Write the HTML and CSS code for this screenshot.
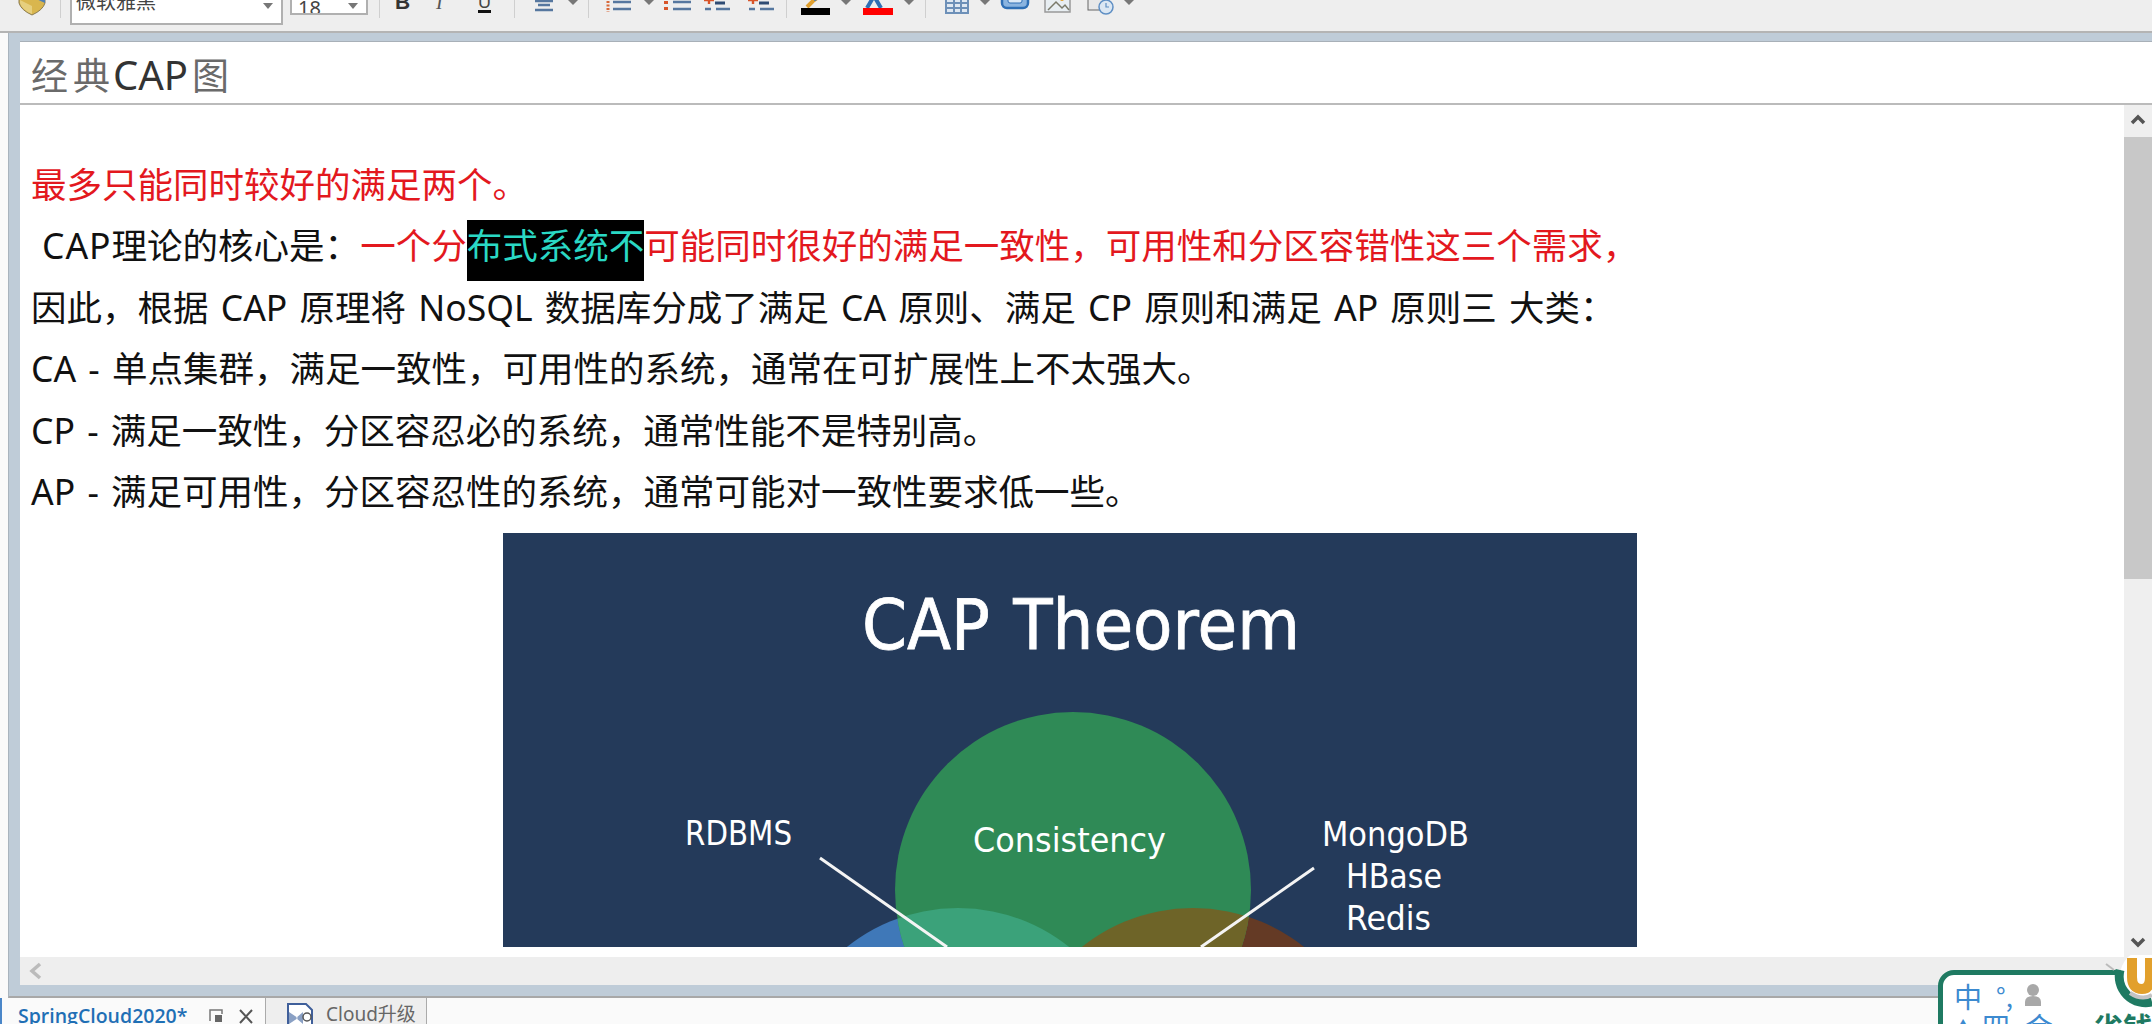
FILE: index.html
```html
<!DOCTYPE html>
<html lang="zh-CN">
<head>
    <meta charset="UTF-8">
    <title>经典CAP图</title>
    <link rel="stylesheet" href="styles.css">
</head>
<body>
    <div class="app">
        <!-- 工具栏 -->
        <div class="toolbar">
            <svg width="52" height="31" viewBox="0 0 52 31">
                <path d="M11 -8 L37 -8 L37 3 Q35 10 24 15 Q13 10 11 3 Z" fill="#d9b64e" stroke="#8a7b50"/>
                <path d="M24 -8 L37 -8 L37 3 L24 -3 Z" fill="#4f7fb5"/>
                <path d="M12 0 L24 6 L24 14 Q14 10 12 3 Z" fill="#e6cf7e"/>
            </svg>
            <span class="sep"></span>
            <div class="select font-select">微软雅黑<i class="caret"></i></div>
            <div class="select size-select">18<i class="caret"></i></div>
            <span class="sep sep-after-select"></span>
            <svg width="134" height="31" viewBox="0 0 134 31">
                <text x="15" y="9" class="tb-bold">B</text>
                <text x="56" y="9" class="tb-italic">I</text>
                <text x="98" y="8" class="tb-under">U</text>
                <rect x="98" y="10" width="13" height="3" fill="#111"/>
            </svg>
            <span class="sep"></span>
            <svg width="73" height="31" viewBox="0 0 73 31">
                <path d="M20 1H38M23 5H35M20 10H38" stroke="#56779f" stroke-width="2.4"/>
                <path d="M53 0H63L58 5Z" fill="#777"/>
            </svg>
            <span class="sep"></span>
            <svg width="197" height="31" viewBox="0 0 197 31">
                <path d="M19 1V12" stroke="#d8693a" stroke-width="3" stroke-dasharray="2 1.5"/>
                <path d="M24 2H42M24 9H42" stroke="#56779f" stroke-width="2.4"/>
                <path d="M55 0H65L60 5Z" fill="#777"/>
                <path d="M77 1V12" stroke="#d8552a" stroke-width="4" stroke-dasharray="3 3"/>
                <path d="M84 2H102M84 9H102" stroke="#56779f" stroke-width="2.4"/>
                <path d="M115 0H125M120 -2V4" stroke="#d8552a" stroke-width="2.4"/>
                <path d="M126 3H136" stroke="#2f4c74" stroke-width="3"/>
                <path d="M116 9H122M127 9H141" stroke="#56779f" stroke-width="2.4"/>
                <path d="M159 0H169M164 -2V4" stroke="#d8552a" stroke-width="2.4"/>
                <path d="M170 3H180" stroke="#2f4c74" stroke-width="3"/>
                <path d="M160 9H166M171 9H185" stroke="#56779f" stroke-width="2.4"/>
            </svg>
            <span class="sep"></span>
            <svg width="138" height="31" viewBox="0 0 138 31">
                <path d="M20 7L26 1L30 -2" stroke="#e0a030" stroke-width="4" fill="none"/>
                <path d="M27 0L32 -3" stroke="#3f78b8" stroke-width="3"/>
                <rect x="14" y="8" width="29" height="7" fill="#000"/>
                <path d="M54 0H64L59 5Z" fill="#777"/>
                <path d="M80 8L87 -4L94 8" stroke="#2f6fb5" stroke-width="4" fill="none"/>
                <rect x="76" y="8" width="30" height="7" fill="#f00"/>
                <path d="M117 0H127L122 5Z" fill="#777"/>
            </svg>
            <span class="sep"></span>
            <svg width="222" height="31" viewBox="0 0 222 31">
                <rect x="20" y="-4" width="22" height="17" fill="#dfe8f2" stroke="#6d90b8" stroke-width="2"/>
                <path d="M21 3H41M21 8H41M28 -4V13M35 -4V13" stroke="#6d90b8" stroke-width="2"/>
                <path d="M54 0H64L59 5Z" fill="#777"/>
                <rect x="76" y="-6" width="26" height="14" rx="5" fill="#8ab4e0" stroke="#2f6fb5" stroke-width="2.5"/>
                <rect x="82" y="-2" width="14" height="5" rx="2" fill="#dce9f6" stroke="#2f6fb5"/>
                <rect x="119" y="-5" width="25" height="17" fill="#e8eef2" stroke="#999" stroke-width="1.5"/>
                <path d="M122 10L130 2L136 8L139 5L143 10" stroke="#7a7a6a" stroke-width="1.5" fill="none"/>
                <circle cx="136" cy="-1" r="2" fill="#e0a030"/>
                <rect x="162" y="-3" width="16" height="13" fill="#e8e8e8" stroke="#666"/>
                <circle cx="180" cy="7" r="7" fill="#dbe7f3" stroke="#5f8fc4" stroke-width="1.5"/>
                <path d="M180 3V7H183" stroke="#5f8fc4" stroke-width="1.2" fill="none"/>
                <path d="M198 0H208L203 5Z" fill="#777"/>
            </svg>
        </div>

        <!-- 笔记内容 -->
        <div class="frame">
            <div class="editor">
                <div class="note-title"><span class="cjk-thin title-jing">经</span><span class="cjk-thin">典</span><span class="title-latin">CAP</span><span class="cjk-thin">图</span></div>
                <div class="doc-row">
                    <div class="doc">
                        <p class="line red">最多只能同时较好的满足两个。</p>
                        <p class="line indent"><span class="cap-wide">CAP</span>理论的核心是：<span class="red">一个分</span><span class="hl">布式系统不</span><span class="red">可能同时很好的满足一致性，可用性和分区容错性这三个需求，</span></p>
                        <p class="line">因此，根据 CAP 原理将 NoSQL 数据库分成了满足 CA 原则、满足 CP 原则和满足 AP 原则三 大类：</p>
                        <p class="line">CA - 单点集群，满足一致性，可用性的系统，通常在可扩展性上不太强大。</p>
                        <p class="line">CP - 满足一致性，分区容忍必的系统，通常性能不是特别高。</p>
                        <p class="line">AP - 满足可用性，分区容忍性的系统，通常可能对一致性要求低一些。</p>
                        <svg class="cap-image" width="1134" height="414" viewBox="0 0 1134 414">
                            <defs>
                                <clipPath id="clip-green"><circle cx="570" cy="357" r="178"/></clipPath>
                            </defs>
                            <rect width="1134" height="414" fill="#243a5a"/>
                            <circle cx="455" cy="553" r="178" fill="#3f78b8"/>
                            <circle cx="690" cy="553" r="178" fill="#643a25"/>
                            <circle cx="570" cy="357" r="178" fill="#2f8a56"/>
                            <g clip-path="url(#clip-green)">
                                <circle cx="455" cy="553" r="178" fill="#3ba27a"/>
                                <circle cx="690" cy="553" r="178" fill="#6e6428"/>
                            </g>
                            <path d="M317 325L444 414M811 335L698 414" stroke="#f4f4f4" stroke-width="3"/>
                            <text x="359" y="116" class="cap-heading" textLength="438" lengthAdjust="spacingAndGlyphs">CAP Theorem</text>
                            <text x="182" y="312" class="cap-label" textLength="107" lengthAdjust="spacingAndGlyphs">RDBMS</text>
                            <text x="470" y="319" class="cap-label" textLength="193" lengthAdjust="spacingAndGlyphs">Consistency</text>
                            <text x="819" y="313" class="cap-label" textLength="147" lengthAdjust="spacingAndGlyphs">MongoDB</text>
                            <text x="843" y="355" class="cap-label" textLength="96" lengthAdjust="spacingAndGlyphs">HBase</text>
                            <text x="843" y="397" class="cap-label" textLength="85" lengthAdjust="spacingAndGlyphs">Redis</text>
                        </svg>
                    </div>
                    <div class="vscroll">
                        <svg class="arrow" width="28" height="32" viewBox="0 0 28 32"><path d="M8 18L14 12L20 18" stroke="#555" stroke-width="3.5" fill="none"/></svg>
                        <div class="thumb"></div>
                        <svg class="arrow arrow-end" width="28" height="30" viewBox="0 0 28 30"><path d="M8 12L14 18L20 12" stroke="#555" stroke-width="3.5" fill="none"/></svg>
                    </div>
                </div>
                <div class="hscroll">
                    <svg width="28" height="28" viewBox="0 0 28 28"><path d="M20 7L12 14L20 21" stroke="#bbb" stroke-width="3.5" fill="none"/></svg>
                </div>
            </div>
        </div>

        <!-- 标签页 -->
        <div class="tabs">
            <div class="tab tab-active">
                <span class="tab-name">SpringCloud2020*</span>
                <svg class="tab-tools" width="46" height="18" viewBox="0 0 46 18">
                    <path d="M1 14V3H13V7" stroke="#777" stroke-width="1.5" fill="none"/>
                    <rect x="6" y="8" width="7" height="7" fill="#666"/>
                    <path d="M31 3L43 16M43 3L31 16" stroke="#555" stroke-width="2"/>
                </svg>
            </div>
            <div class="tab tab-other">
                <svg width="28" height="24" viewBox="0 0 28 24">
                    <path d="M2 24V2H20L26 8V24" stroke="#3f5f9a" stroke-width="2" fill="#fff"/>
                    <path d="M3 10L12 16L3 22ZM17 10L10 16L17 22Z" fill="#8aa0c4"/>
                    <circle cx="21" cy="15" r="4" fill="none" stroke="#555" stroke-width="1.5"/>
                </svg>
                <span>Cloud升级</span>
            </div>
        </div>

        <!-- 输入法浮窗 -->
        <div class="ime">
            <div class="ime-row">
                <span class="ime-zh">中</span>
                <span class="ime-punct">°,</span>
                <svg width="18" height="24" viewBox="0 0 18 24">
                    <circle cx="9" cy="6" r="6" fill="#a8a8a8"/>
                    <path d="M1 22V18Q1 12 9 12Q17 12 17 18V22Z" fill="#a8a8a8"/>
                </svg>
            </div>
            <div class="ime-row ime-row-two">
                <span class="ime-tri">▲</span>
                <span>四</span>
                <span class="ime-hui">会</span>
                <span class="ime-brand">省钱</span>
            </div>
        </div>
        <svg class="ime-logo" width="52" height="60" viewBox="0 0 52 60">
            <path d="M6 9L14 15" stroke="#bbb" stroke-width="2"/>
            <circle cx="46" cy="21" r="26" fill="#fff"/>
            <path d="M20 15A26.5 26.5 0 0 0 52 47" stroke="#1f7a62" stroke-width="9" fill="none"/>
            <path d="M30 38Q42 46 52 40" stroke="#c4c4c4" stroke-width="4" fill="none"/>
            <path d="M32 3V22Q32 34 42 34Q50 34 50 22V3" stroke="#e2a02c" stroke-width="10" fill="none"/>
        </svg>
    </div>
</body>
</html>
```

FILE: styles.css
```css
html, body {
    margin: 0;
    padding: 0;
    height: 100%;
    overflow: hidden;
}

body {
    background-color: #fafafa;
    font-family: "Noto Sans", "Noto Sans CJK SC", sans-serif;
}

.app {
    position: relative;
    display: flex;
    flex-direction: column;
    width: 2152px;
    height: 1024px;
    overflow: hidden;
}

/* toolbar */
.toolbar {
    display: flex;
    align-items: flex-start;
    height: 31px;
    flex: none;
    padding-left: 8px;
    background-color: #eeeeee;
    border-bottom: 2px solid #b4b4b4;
    overflow: hidden;
}

.toolbar svg {
    flex: none;
}

.sep {
    flex: none;
    width: 1px;
    height: 18px;
    background-color: #cfcfcf;
}

.sep-after-select {
    margin-left: 11px;
}

.select {
    position: relative;
    flex: none;
    box-sizing: border-box;
    background-color: #fff;
    border: 2px solid #b0b0b0;
    border-top: none;
    color: #444;
    overflow: hidden;
}

.font-select {
    width: 213px;
    height: 25px;
    margin-left: 9px;
    padding-left: 4px;
    font-size: 20px;
    line-height: 4px;
}

.size-select {
    width: 78px;
    height: 15px;
    margin-left: 7px;
    padding-left: 6px;
    font-size: 20px;
    line-height: 16px;
}

.caret {
    position: absolute;
    right: 8px;
    top: 3px;
    width: 0;
    height: 0;
    border-left: 5px solid transparent;
    border-right: 5px solid transparent;
    border-top: 6px solid #777;
}

.tb-bold {
    font: bold 21px "Liberation Sans", sans-serif;
    fill: #333;
}

.tb-italic {
    font: italic 20px "Liberation Serif", serif;
    fill: #555;
}

.tb-under {
    font: 18px "Liberation Sans", sans-serif;
    fill: #444;
}

/* editor frame */
.frame {
    flex: none;
    height: 965px;
    box-sizing: border-box;
    margin-left: 8px;
    padding: 8px 0 11px 11px;
    background-color: #bfccd8;
    border-bottom: 2px solid #a8a8a8;
    border-left: 1px solid #a9b4be;
}

.editor {
    display: flex;
    flex-direction: column;
    height: 100%;
    background-color: #fff;
}

.note-title {
    flex: none;
    box-sizing: border-box;
    height: 64px;
    padding: 10px 0 0 11px;
    border-top: 1px solid #a8b0b8;
    border-bottom: 2px solid #bbbbbb;
    font-size: 37px;
    line-height: 46px;
    color: #333;
    white-space: pre;
}

.cjk-thin {
    color: #6a6a6a;
}

.title-jing {
    margin-right: 5px;
}

.title-latin {
    margin: 0 4px 0 3px;
    font-size: 40px;
}

.doc-row {
    display: flex;
    flex: 1;
    min-height: 0;
}

.doc {
    flex: 1;
    min-width: 0;
    box-sizing: border-box;
    padding: 49px 0 0 11px;
    overflow: hidden;
    color: #111;
    font-size: 35.5px;
    word-spacing: 3px;
}

.line {
    margin: 0;
    height: 61.4px;
    line-height: 61.4px;
    white-space: pre;
}

.indent {
    padding-left: 11px;
}

.cap-wide {
    letter-spacing: 1px;
}

.red {
    color: #e3181e;
}

.hl {
    display: inline-block;
    height: 61px;
    line-height: 50px;
    background-color: #000;
    color: #2ad8c4;
}

.cap-image {
    display: block;
    margin: 11px 0 0 472px;
}

.cap-heading {
    font: 70px "DejaVu Sans", sans-serif;
    fill: #fff;
    stroke: #fff;
    stroke-width: 0.8px;
}

.cap-label {
    font: 34px "DejaVu Sans", sans-serif;
    fill: #fff;
}

.vscroll {
    display: flex;
    flex-direction: column;
    flex: none;
    width: 28px;
    background-color: #efefef;
}

.arrow {
    display: block;
    flex: none;
}

.arrow-end {
    margin-top: auto;
}

.thumb {
    flex: none;
    height: 442px;
    background-color: #c8c8c8;
}

.hscroll {
    flex: none;
    height: 28px;
    background-color: #eeeeee;
}

/* tabs */
.tabs {
    display: flex;
    flex: none;
    height: 26px;
    overflow: hidden;
    font-size: 19px;
}

.tab {
    display: flex;
    align-items: flex-start;
    box-sizing: border-box;
    height: 26px;
}

.tab-active {
    width: 265px;
    padding: 3px 0 0 16px;
    border-left: 2px solid #4a86c8;
    background-color: #fafafa;
}

.tab-name {
    width: 191px;
    margin-top: 2px;
    font: 600 19.5px "Open Sans", sans-serif;
    color: #1f6fb5;
    line-height: 26px;
    white-space: nowrap;
}

.tab-tools {
    margin-top: 6px;
}

.tab-other {
    width: 162px;
    gap: 12px;
    padding: 4px 0 0 20px;
    background-color: #eeeeee;
    border-left: 1px solid #aaa;
    border-right: 1px solid #aaa;
    color: #666;
    line-height: 24px;
}

/* floating ime */
.ime {
    position: absolute;
    left: 1938px;
    top: 970px;
    width: 230px;
    height: 70px;
    box-sizing: border-box;
    padding: 6px 0 0 11px;
    background-color: #fff;
    border: 5px solid #1f7a62;
    border-radius: 16px 0 0 0;
    color: #3c8ad0;
    font-family: "Noto Sans CJK SC", sans-serif;
}

.ime-row {
    display: flex;
    align-items: center;
    gap: 14px;
    height: 30px;
    font-size: 28px;
    line-height: 30px;
}

.ime-punct {
    width: 14px;
    font-size: 26px;
}

.ime-row-two {
    height: 30px;
    gap: 10px;
}

.ime-tri {
    font-size: 18px;
}

.ime-hui {
    margin-left: 5px;
}

.ime-brand {
    margin-left: 30px;
    color: #1f7a62;
    font-weight: bold;
    font-size: 30px;
}

.ime-logo {
    position: absolute;
    left: 2100px;
    top: 955px;
}
```
